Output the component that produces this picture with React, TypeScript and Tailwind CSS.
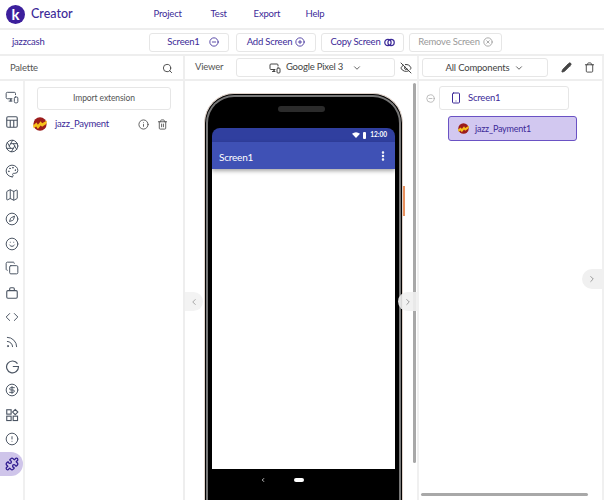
import React from "react";
import {
  Search, Info, Trash, Trash2, MonitorSmartphone, Aperture, Palette, Map, Compass, Smile, Copy,
  Code, Rss, CircleDollarSign, CircleAlert, Puzzle, ChevronDown, ChevronLeft, ChevronRight, EyeOff, Pencil,
  CircleMinus, Smartphone, CirclePlus, CircleX, EllipsisVertical,
} from "lucide-react";

const JazzLogo = ({ size = 18 }: { size?: number }) => (
  <svg width={size} height={size} viewBox="0 0 20 20" className="shrink-0">
    <circle cx="10" cy="10" r="9.5" fill="#9c1c1c" />
    <path d="M0 12 L5 8 L7 11 L11 6 L13 9 L20 5 L19 10 L13 14 L11 12 L7 17 L4.5 13.5 L1 16 Z" fill="#f6c21c" />
  </svg>
);

const Svg = ({ children, s = 14 }: { children: React.ReactNode; s?: number }) => (
  <svg width={s} height={s} viewBox="0 0 24 24" fill="none" stroke="#4b5563" strokeWidth="1.9">{children}</svg>
);
const GIcon = () => <Svg s={15}><path d="M20 7.5A9.5 9.5 0 1 0 21.5 12H12.5" /></Svg>;
const TableIcon = () => <Svg><rect x="3" y="3" width="18" height="18" rx="2" /><path d="M3 9H21M9 9V21M15 9V21" /></Svg>;
const BagIcon = () => <Svg><rect x="3" y="8" width="18" height="13" rx="2" /><path d="M8 8V5a2 2 0 0 1 2-2h4a2 2 0 0 1 2 2V8" /></Svg>;
const ShapesIcon = () => <Svg><rect x="3" y="3" width="7.5" height="7.5" /><path d="M17.5 2.5L22 7l-4.5 4.5L13 7Z" /><rect x="3" y="14" width="7.5" height="7.5" /><rect x="14" y="14" width="7.5" height="7.5" /></Svg>;
const LinkedCircles = () => (
  <svg width="11" height="9" viewBox="0 0 14 10" fill="none" stroke="currentColor" strokeWidth="1.6">
    <circle cx="5" cy="5" r="4" /><circle cx="9" cy="5" r="4" />
  </svg>
);

const ic = (I: React.ComponentType<any>) => <I size={14} strokeWidth={1.7} className="text-[#4b5563]" />;
const rail: React.ReactNode[] = [
  ic(MonitorSmartphone), <TableIcon />, ic(Aperture), ic(Palette), ic(Map), ic(Compass), ic(Smile), ic(Copy),
  <BagIcon />, ic(Code), ic(Rss), <GIcon />, ic(CircleDollarSign), <ShapesIcon />, ic(CircleAlert),
];

function ToolButton({ label, icon, disabled, className }: { label: string; icon: React.ReactNode; disabled?: boolean; className: string }) {
  return (
    <div className={`h-[19px] flex items-center justify-center gap-[3px] rounded-[3px] border border-[#e6e6e6] ${disabled ? "text-[#9a9a9a]" : "text-[#3c2a98]"} ${className}`}>
      {label}
      {icon}
    </div>
  );
}

export default function App() {
  return (
    <div className="w-[604px] h-[500px] overflow-hidden bg-white flex flex-col font-['Lato','Noto_Sans',sans-serif] text-[#3c2a98] text-[9.5px] tracking-[-0.2px]">
      <header className="h-[30px] shrink-0 flex items-center border-b-2 border-[#eeeeee]">
        <div className="ml-[6px] w-[19px] h-[19px] rounded-full bg-[#3c1f9c] flex items-center justify-center text-white text-[15px] font-bold leading-none">k</div>
        <span className="ml-[6px] text-[12.5px] font-medium tracking-normal">Creator</span>
        <nav className="ml-[81px] flex">
          <span className="w-[57px]">Project</span>
          <span className="w-[43px]">Test</span>
          <span className="w-[52px]">Export</span>
          <span>Help</span>
        </nav>
      </header>

      <div className="h-[26px] shrink-0 flex items-center border-b-2 border-[#eeeeee]">
        <span className="ml-[12px] w-[137px]">jazzcash</span>
        <ToolButton className="w-[80px] pl-[8px]" label="Screen1" icon={<CircleMinus size={10} className="ml-[6px]" />} />
        <ToolButton className="w-[80px] ml-[7px]" label="Add Screen" icon={<CirclePlus size={10} />} />
        <ToolButton className="w-[83px] ml-[5px]" label="Copy Screen" icon={<LinkedCircles />} />
        <ToolButton className="w-[93px] ml-[5px]" disabled label="Remove Screen" icon={<CircleX size={10} />} />
      </div>

      <div className="flex-1 min-h-0 flex">
        <aside className="w-[185px] shrink-0 flex flex-col border-r-2 border-[#eeeeee]">
          <div className="h-[25px] shrink-0 flex items-center justify-between px-[10px] pt-[1px] border-b-2 border-[#eeeeee] text-[#555555]">
            Palette
            <Search size={11} className="text-[#444444]" />
          </div>
          <div className="flex-1 flex min-h-0">
            <div className="w-[25px] shrink-0 border-r-2 border-[#f0f0f0] pt-[4px] flex flex-col">
              {rail.map((node, i) => (
                <div key={i} className="h-[24.45px] flex items-center justify-center pl-[1px]">{node}</div>
              ))}
              <div className="h-[24.45px] flex items-center justify-center bg-[#cfc5ea] rounded-r-full">
                <Puzzle size={14} strokeWidth={2.2} className="text-[#2f1a8f]" />
              </div>
            </div>
            <div className="flex-1 min-w-0 flex flex-col">
              <div className="mt-[6px] ml-[12px] w-[134px] h-[23px] rounded-[3px] border border-[#e6e6e6] flex items-center justify-center text-[8.5px] text-[#555555] tracking-[-0.1px]">
                Import extension
              </div>
              <div className="mt-[4px] ml-[8px] flex items-center h-[20px]">
                <JazzLogo size={14} />
                <span className="ml-[8px] w-[83px]">jazz_Payment</span>
                <Info size={11} className="text-[#555555]" />
                <Trash2 size={11} className="ml-[8px] text-[#555555]" />
              </div>
            </div>
          </div>
        </aside>

        <main className="w-[234px] shrink-0 flex flex-col border-r-2 border-[#f0f0f0] relative">
          <div className="h-[25px] shrink-0 flex items-center border-b-2 border-[#eeeeee]">
            <span className="ml-[10px] w-[41px] text-[#555555]">Viewer</span>
            <div className="w-[159px] h-[19px] rounded-[3px] border border-[#e6e6e6] flex items-center justify-center gap-[5px] text-[#444444]">
              <MonitorSmartphone size={12} /> Google Pixel 3 <ChevronDown size={10} className="ml-[4px]" />
            </div>
            <EyeOff size={12} className="ml-[5px] text-[#444444]" />
          </div>
          <div className="flex-1 min-h-0 overflow-hidden pt-[12px] pl-[19px] relative">
            <div className="w-[199px] h-[420px] rounded-t-[30px] border border-b-0 border-[#dfd2ca] bg-black pt-[1px] px-[1px]">
              <div className="h-full rounded-t-[28px] border-x-[2px] border-t-[2px] border-[#777777] bg-black px-[4px] pt-[31px] flex flex-col relative">
                <div className="absolute top-[9px] left-[70px] w-[47px] h-[6px] rounded-full bg-[#2b2b2b]" />
                <div className="h-[14px] shrink-0 rounded-t-[8px] bg-[#303f9f] flex items-center justify-end gap-[3px] pr-[8px] text-white text-[6.5px] font-bold tracking-normal">
                  <svg width="8" height="6" viewBox="0 0 16 12" fill="white"><path d="M0 3.5Q8 -2.5 16 3.5L8 12Z" /></svg>
                  <div className="w-[3px] h-[7px] bg-white rounded-[1px]" />
                  <span className="ml-[1px]">12:00</span>
                </div>
                <div className="h-[27px] shrink-0 bg-[#3f51b5] flex items-center justify-between pl-[7px] pr-[6px] pt-[3px] text-white text-[10px] shadow-[0_2px_4px_rgba(0,0,0,0.35)] relative">
                  Screen1
                  <EllipsisVertical size={12} strokeWidth={3} className="-mt-[3px]" />
                </div>
                <div className="h-[300px] shrink-0 bg-white" />
                <div className="h-[22px] shrink-0 bg-black flex items-center pl-[48px] text-white">
                  <ChevronLeft size={6} strokeWidth={3} />
                  <div className="ml-[28px] w-[10px] h-[4px] rounded-full bg-white" />
                </div>
              </div>
            </div>
            <div className="absolute left-[218px] top-[105px] w-[1.5px] h-[30px] bg-[#e8915f]" />
            <div className="absolute right-[1px] top-[2px] w-[3px] h-[380px] rounded-full bg-[#a8a8a8]" />
            <div className="absolute left-0 top-[211px] w-[18px] h-[19px] rounded-r-full bg-[#f3f3f3] flex items-center justify-center">
              <ChevronLeft size={10} className="text-[#999999]" />
            </div>
            <div className="absolute right-0 top-[211px] w-[19px] h-[19px] rounded-l-full bg-[#f0f0f0]/90 flex items-center justify-center">
              <ChevronRight size={10} className="text-[#888888]" />
            </div>
          </div>
        </main>

        <section className="flex-1 min-w-0 flex flex-col relative border-r-2 border-[#f0f0f0]">
          <div className="h-[25px] shrink-0 flex items-center border-b-2 border-[#eeeeee] text-[#444444]">
            <div className="ml-[3px] w-[126px] h-[19px] rounded-[3px] border border-[#e6e6e6] flex items-center justify-center gap-[5px] pt-[1px]">
              All Components <ChevronDown size={10} />
            </div>
            <Pencil size={11} fill="currentColor" className="ml-[13px]" />
            <Trash size={11} className="ml-[12px]" />
          </div>
          <div className="flex items-center mt-[5px]">
            <CircleMinus size={9} className="ml-[7px] text-[#a8a8a8]" />
            <div className="ml-[4px] w-[130px] h-[24px] rounded-[3px] border border-[#e6e6e6] flex items-center pl-[10px]">
              <Smartphone size={12} strokeWidth={2} />
              <span className="ml-[6px]">Screen1</span>
            </div>
          </div>
          <div className="mt-[6px] ml-[29px] w-[129px] h-[25px] rounded-[3px] border border-[#6a52c4] bg-[#d2c8f0] flex items-center pl-[9px] text-[9px]">
            <JazzLogo size={11} />
            <span className="ml-[6px]">jazz_Payment1</span>
          </div>
          <div className="absolute right-0 top-[213px] w-[20px] h-[20px] rounded-l-full bg-[#f0f0f0] flex items-center justify-center">
            <ChevronRight size={10} className="text-[#888888]" />
          </div>
          <div className="absolute left-[2px] bottom-[4px] w-[167px] h-[3px] rounded-full bg-[#a8a8a8]" />
        </section>
      </div>
    </div>
  );
}
